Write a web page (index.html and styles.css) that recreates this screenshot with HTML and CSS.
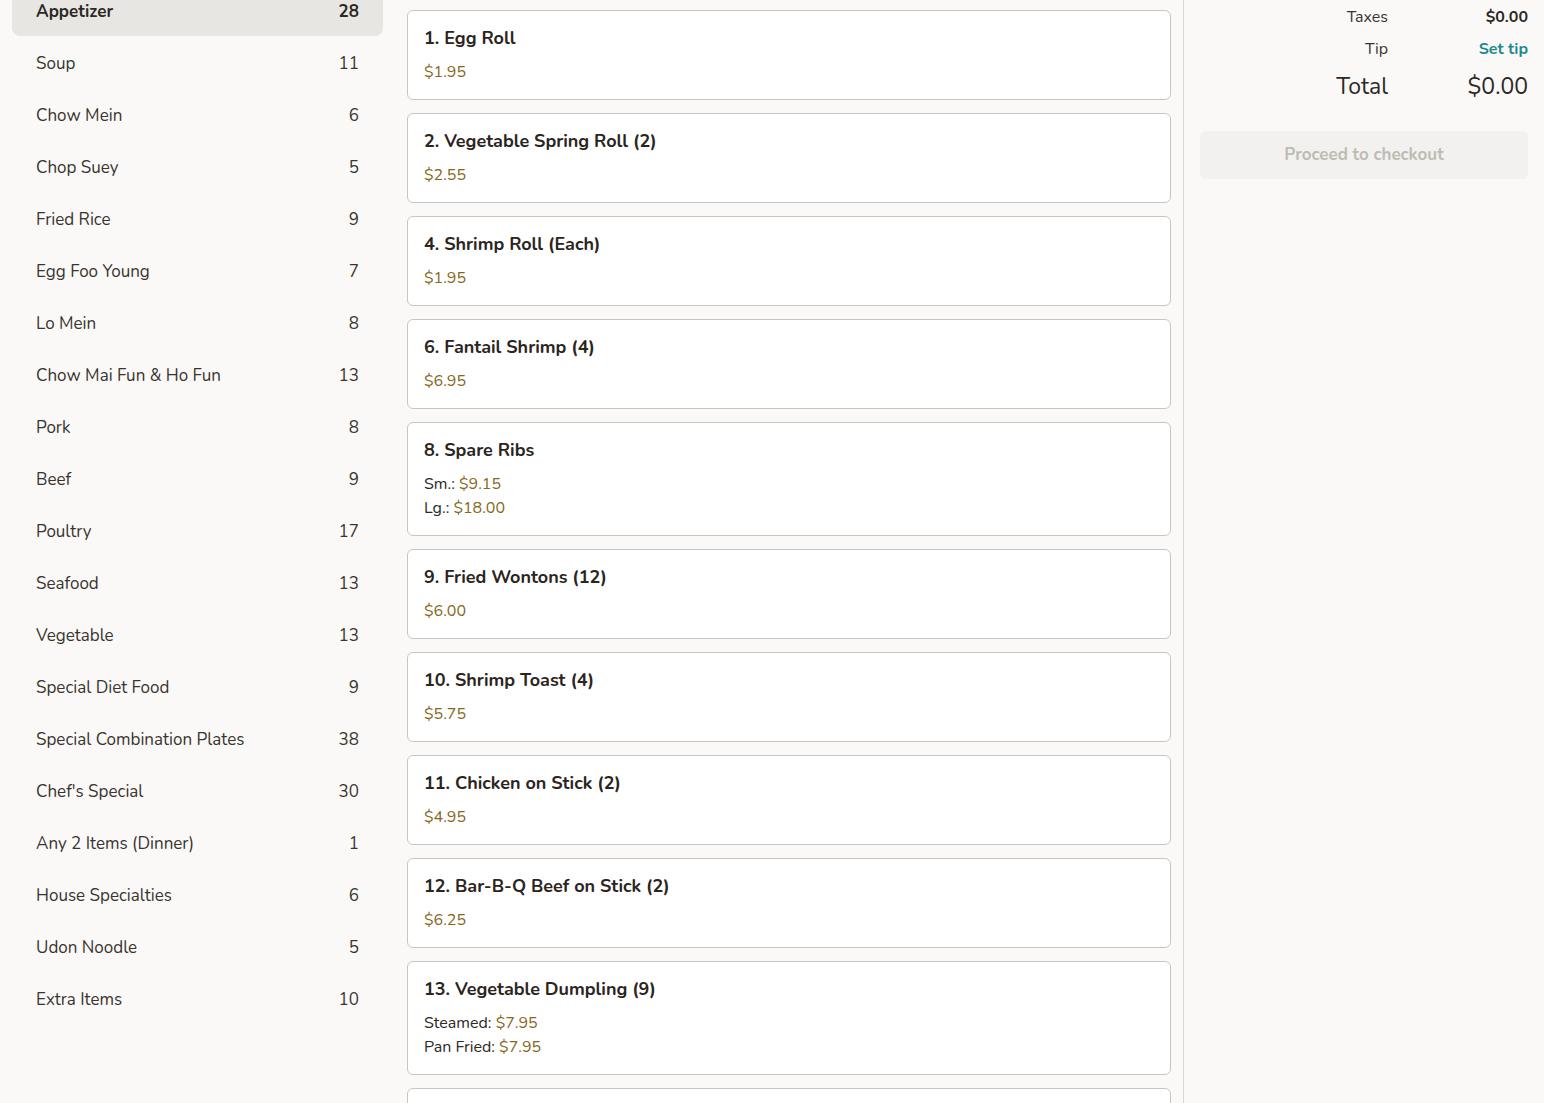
FILE: index.html
```html
<!DOCTYPE html>
<html lang="en">
<head>
<meta charset="utf-8">
<title>Menu</title>
<link rel="stylesheet" href="styles.css">
</head>
<body>
<div class="page">
  <nav class="sidebar">
    <ul class="cats">
      <li class="cat active"><span>Appetizer</span><span>28</span></li>
      <li class="cat"><span>Soup</span><span>11</span></li>
      <li class="cat"><span>Chow Mein</span><span>6</span></li>
      <li class="cat"><span>Chop Suey</span><span>5</span></li>
      <li class="cat"><span>Fried Rice</span><span>9</span></li>
      <li class="cat"><span>Egg Foo Young</span><span>7</span></li>
      <li class="cat"><span>Lo Mein</span><span>8</span></li>
      <li class="cat"><span>Chow Mai Fun &amp; Ho Fun</span><span>13</span></li>
      <li class="cat"><span>Pork</span><span>8</span></li>
      <li class="cat"><span>Beef</span><span>9</span></li>
      <li class="cat"><span>Poultry</span><span>17</span></li>
      <li class="cat"><span>Seafood</span><span>13</span></li>
      <li class="cat"><span>Vegetable</span><span>13</span></li>
      <li class="cat"><span>Special Diet Food</span><span>9</span></li>
      <li class="cat"><span>Special Combination Plates</span><span>38</span></li>
      <li class="cat"><span>Chef's Special</span><span>30</span></li>
      <li class="cat"><span>Any 2 Items (Dinner)</span><span>1</span></li>
      <li class="cat"><span>House Specialties</span><span>6</span></li>
      <li class="cat"><span>Udon Noodle</span><span>5</span></li>
      <li class="cat"><span>Extra Items</span><span>10</span></li>
    </ul>
  </nav>
  <main class="menu">
    <div class="card"><h3>1. Egg Roll</h3><div class="prices"><div><span class="price">$1.95</span></div></div></div>
    <div class="card"><h3>2. Vegetable Spring Roll (2)</h3><div class="prices"><div><span class="price">$2.55</span></div></div></div>
    <div class="card"><h3>4. Shrimp Roll (Each)</h3><div class="prices"><div><span class="price">$1.95</span></div></div></div>
    <div class="card"><h3>6. Fantail Shrimp (4)</h3><div class="prices"><div><span class="price">$6.95</span></div></div></div>
    <div class="card"><h3>8. Spare Ribs</h3><div class="prices"><div>Sm.: <span class="price">$9.15</span></div><div>Lg.: <span class="price">$18.00</span></div></div></div>
    <div class="card"><h3>9. Fried Wontons (12)</h3><div class="prices"><div><span class="price">$6.00</span></div></div></div>
    <div class="card"><h3>10. Shrimp Toast (4)</h3><div class="prices"><div><span class="price">$5.75</span></div></div></div>
    <div class="card"><h3>11. Chicken on Stick (2)</h3><div class="prices"><div><span class="price">$4.95</span></div></div></div>
    <div class="card"><h3>12. Bar-B-Q Beef on Stick (2)</h3><div class="prices"><div><span class="price">$6.25</span></div></div></div>
    <div class="card"><h3>13. Vegetable Dumpling (9)</h3><div class="prices"><div>Steamed: <span class="price">$7.95</span></div><div>Pan Fried: <span class="price">$7.95</span></div></div></div>
    <div class="card stub"></div>
  </main>
  <aside class="cart">
    <div class="summary">
      <div class="lbl">Taxes</div><div class="val strong">$0.00</div>
      <div class="lbl">Tip</div><div class="val tip">Set tip</div>
      <div class="lbl total">Total</div><div class="val total">$0.00</div>
    </div>
    <button class="checkout" disabled>Proceed to checkout</button>
  </aside>
</div>
</body>
</html>
```
FILE: styles.css
```css
* { box-sizing: border-box; }
html, body { margin: 0; padding: 0; height: 100%; overflow: hidden; }
body {
  background: #faf9f7;
  color: #2b2825;
  font-family: "Nunito", Lato, "Noto Sans", sans-serif;
}
.page {
  display: flex;
  align-items: flex-start;
  height: 1103px;
}
.sidebar {
  width: 395px;
  flex: none;
  padding: 0 12px;
}
.cats {
  list-style: none;
  margin: -14px 0 0;
  padding: 0;
}
.cat {
  display: flex;
  justify-content: space-between;
  align-items: center;
  height: 50px;
  margin-bottom: 2px;
  padding: 1px 24px 0;
  font-size: 17px;
  color: #38342f;
  border-radius: 8px;
}
.cat.active {
  background: #e8e6e3;
  font-weight: 700;
  color: #2b2825;
}
.menu {
  width: 789px;
  flex: none;
  height: 1103px;
  overflow: hidden;
  padding: 10px 12px;
  border-right: 1px solid #d9d6d2;
  display: flex;
  flex-direction: column;
  gap: 13px;
}
.card {
  flex: none;
  background: #fff;
  border: 1px solid #c9c6c2;
  border-radius: 6px;
  padding: 15px 16px;
}
.card.stub { height: 90px; }
.card h3 {
  margin: 0;
  font-size: 18px;
  line-height: 24px;
  font-weight: 700;
  color: #2b2420;
}
.prices {
  margin-top: 10px;
  font-size: 16px;
  line-height: 24px;
  color: #2b2825;
}
.price { color: #86671c; }
.cart {
  width: 360px;
  flex: none;
  padding: 1px 16px 0;
}
.summary {
  display: grid;
  grid-template-columns: 1fr 128px;
  column-gap: 12px;
  text-align: right;
  font-size: 16px;
  line-height: 32px;
}
.lbl { color: #38342f; }
.val.strong { font-weight: 700; }
.val.tip { font-weight: 700; color: #1c8a8e; }
.summary .total {
  font-size: 23px;
  line-height: 32px;
  padding-top: 6px;
  color: #2b2825;
}
.checkout {
  display: block;
  width: 100%;
  margin-top: 28px;
  height: 48px;
  padding: 0 0 2px;
  border: none;
  border-radius: 6px;
  background: #f2f1ef;
  color: #bfbbb5;
  font-family: inherit;
  font-size: 17px;
  font-weight: 700;
}
```
